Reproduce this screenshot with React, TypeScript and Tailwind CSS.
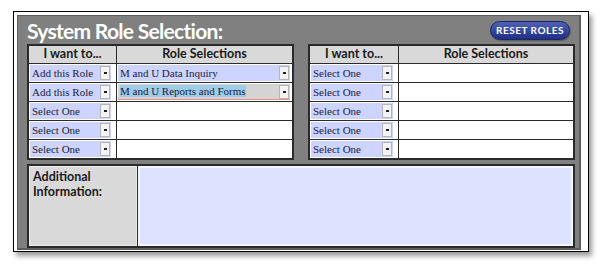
import React from "react";

const sans = { fontFamily: "Lato, 'Open Sans', sans-serif" };
const serif = { fontFamily: "'Liberation Serif', 'Times New Roman', serif" };

function Arrow() {
  return (
    <div className="w-[10px] h-[14px] shrink-0 bg-[#f3f3f3] border border-[#b5b5b5] flex items-center justify-center">
      <div className="w-[3px] h-[2px] bg-[#222]" />
    </div>
  );
}

function Sel({ text, w, bg = "bg-[#ccd4ff]", hl = false }: { text: string; w: string; bg?: string; hl?: boolean }) {
  return (
    <div className={`flex items-center h-[16px] ${w} ${bg} pl-[2px] pr-[1px] ${hl ? "border-b border-[#f08a8a]" : ""}`}>
      <span
        className="flex-1 text-[11px] leading-[13px] text-[#1c1c3c] whitespace-nowrap overflow-hidden"
        style={serif}
      >
        <span className={hl ? "bg-[#9fcbe8]" : ""}>{text}</span>
      </span>
      <Arrow />
    </div>
  );
}

type Row = { a: string; b?: string; bHl?: boolean };

function RoleTable({ rows, leftW, selW }: { rows: Row[]; leftW: string; selW: string }) {
  return (
    <div className="flex-1 border-2 border-[#2a2a2a] bg-[#2a2a2a] flex flex-col gap-px">
      <div className="flex gap-px h-[17px]">
        <div className={`${leftW} bg-[#d9d9d9] flex items-center justify-center text-[12.5px] font-bold text-[#1a1a1a]`} style={sans}>
          I want to...
        </div>
        <div className="flex-1 bg-[#d9d9d9] flex items-center justify-center text-[12.5px] font-bold text-[#1a1a1a]" style={sans}>
          Role Selections
        </div>
      </div>
      {rows.map((r, i) => (
        <div key={i} className="flex gap-px h-[18px]">
          <div className={`${leftW} bg-white flex items-center pl-[1px]`}>
            <Sel text={r.a} w={selW} />
          </div>
          <div className="flex-1 bg-white flex items-center pl-[1px] pr-[2px]">
            {r.b ? (
              <Sel
                text={r.b}
                w="w-full"
                bg={r.bHl ? "bg-[#d4d4d4]" : "bg-[#ccd4ff]"}
                hl={r.bHl}
              />
            ) : null}
          </div>
        </div>
      ))}
    </div>
  );
}

export default function App() {
  const leftRows: Row[] = [
    { a: "Add this Role", b: "M and U Data Inquiry" },
    { a: "Add this Role", b: "M and U Reports and Forms", bHl: true },
    { a: "Select One" },
    { a: "Select One" },
    { a: "Select One" },
  ];
  const rightRows: Row[] = [
    { a: "Select One" },
    { a: "Select One" },
    { a: "Select One" },
    { a: "Select One" },
    { a: "Select One" },
  ];
  return (
    <div className="w-[600px] h-[272px] bg-white pt-[11px] pl-[13px]">
      <div className="w-[576px] h-[241px] border border-black bg-white shadow-[3px_4px_5px_rgba(0,0,0,0.4)] pt-[3px] pl-[3px] pr-[7px] pb-[1px]">
        <div className="h-full bg-[#808080] border border-[#5c5c5c] border-r-2 border-b-2 pl-[9px] pr-[4px] flex flex-col">
          <div className="h-[29px] flex items-center justify-between">
            <div className="text-white font-bold text-[21px] leading-none pt-[1px] tracking-[-0.7px]" style={sans}>
              System Role Selection:
            </div>
            <div className="mr-[5px] mt-[1px] h-[19px] w-[80px] rounded-full border border-[#1b2766] bg-gradient-to-b from-[#4f62b8] to-[#1f2f85] flex items-center justify-center text-white font-bold text-[10px] tracking-[0.5px] shadow-[1px_1px_1px_rgba(0,0,0,0.3)]" style={sans}>
              RESET ROLES
            </div>
          </div>
          <div className="flex gap-[14px]">
            <RoleTable rows={leftRows} leftW="w-[87px]" selW="w-[81px]" />
            <RoleTable rows={rightRows} leftW="w-[88px]" selW="w-[82px]" />
          </div>
          <div className="mt-[4px] h-[86px] border-2 border-[#2a2a2a] bg-[#2a2a2a] flex gap-px">
            <div className="w-[108px] bg-[#d9d9d9] border border-[#ececec] px-[3px] pt-[2px] text-[12.5px] leading-[15px] font-bold text-[#1a1a1a]" style={sans}>
              Additional
              <br />
              Information:
            </div>
            <div className="flex-1 bg-[#dde3fe] border-2 border-[#f4f6ff]" />
          </div>
        </div>
      </div>
    </div>
  );
}
